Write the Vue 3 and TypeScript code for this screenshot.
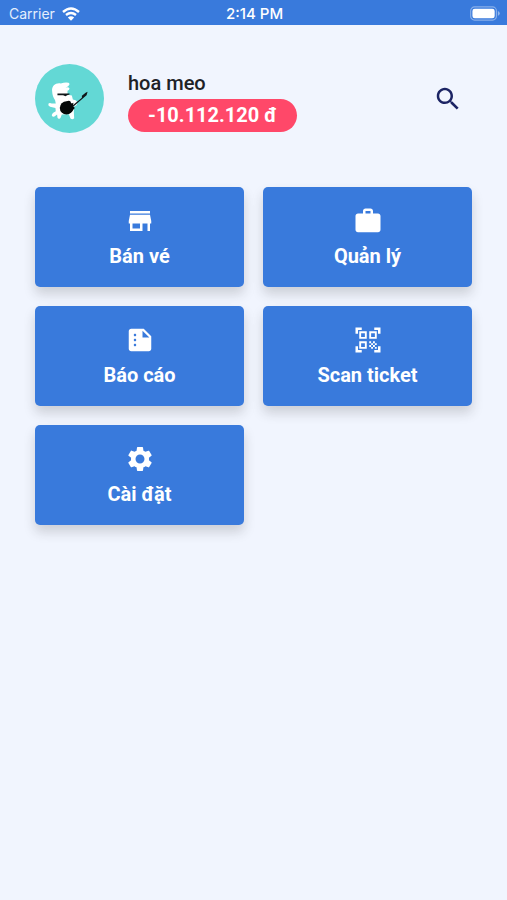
<script setup lang="ts">
interface MenuItem {
  label: string
  icon: string
}

const userName = 'hoa meo'
const balance = '-10.112.120 đ'

const items: MenuItem[] = [
  {
    label: 'Bán vé',
    icon: 'M20 4H4v2h16V4zm1 10v-2l-1-5H4l-1 5v2h1v6h10v-6h4v6h2v-6h1zm-9 4H6v-4h6v4z',
  },
  {
    label: 'Quản lý',
    icon: 'M20 6h-4V4c0-1.11-.89-2-2-2h-4c-1.11 0-2 .89-2 2v2H4c-1.11 0-2 .89-2 2v11c0 1.11.89 2 2 2h16c1.11 0 2-.89 2-2V8c0-1.11-.89-2-2-2zm-6 0h-4V4h4v2z',
  },
  {
    label: 'Báo cáo',
    icon: 'M15 3H5C3.9 3 3 3.9 3 5v14c0 1.1.9 2 2 2h14c1.1 0 2-.9 2-2V9l-6-6zM8 17c-.55 0-1-.45-1-1s.45-1 1-1 1 .45 1 1-.45 1-1 1zm0-4c-.55 0-1-.45-1-1s.45-1 1-1 1 .45 1 1-.45 1-1 1zm0-4c-.55 0-1-.45-1-1s.45-1 1-1 1 .45 1 1-.45 1-1 1zm6 1V4.500l5.500 5.500H14z',
  },
  {
    label: 'Scan ticket',
    icon: 'M9.500 6.500v3h-3v-3h3M11 5H5v6h6V5zM9.500 14.500v3h-3v-3h3M11 13H5v6h6v-6zM17.500 6.500v3h-3v-3h3M19 5h-6v6h6V5zM13 13h1.500v1.500H13V13zM14.500 14.500H16V16h-1.500v-1.500zM16 13h1.500v1.500H16V13zM13 16h1.500v1.500H13V16zM14.500 17.500H16V19h-1.500v-1.500zM16 16h1.500v1.500H16V16zM17.500 14.500H19V16h-1.500v-1.500zM17.500 17.500H19V19h-1.500v-1.500zM22 7h-2V4h-3V2h5v5zM22 22v-5h-2v3h-3v2h5zM2 22h5v-2H4v-3H2v5zM2 2v5h2V4h3V2H2z',
  },
  {
    label: 'Cài đặt',
    icon: 'M19.14 12.94c.04-.3.06-.61.06-.94 0-.32-.02-.64-.07-.94l2.030-1.580c.18-.14.23-.41.12-.61l-1.920-3.320c-.12-.22-.37-.29-.59-.22l-2.390.96c-.5-.38-1.030-.7-1.620-.94L14.400 2.810c-.04-.24-.24-.41-.48-.41h-3.840c-.24 0-.43.17-.47.41L9.250 5.350c-.59.24-1.130.57-1.620.94L5.240 5.330c-.22-.08-.47 0-.59.22L2.740 8.870c-.12.21-.08.47.12.61l2.030 1.580C4.840 11.360 4.800 11.690 4.800 12s.02.64.07.94l-2.030 1.580c-.18.14-.23.41-.12.61l1.920 3.320c.12.22.37.29.59.22l2.390-.96c.5.38 1.030.7 1.620.94l.36 2.540c.05.24.24.41.48.41h3.840c.24 0 .44-.17.47-.41l.36-2.540c.59-.24 1.130-.56 1.620-.94l2.390.96c.22.08.47 0 .59-.22l1.920-3.320c.12-.22.07-.47-.12-.61l-2.010-1.580zM12 15.600c-1.980 0-3.600-1.620-3.600-3.600s1.620-3.600 3.600-3.600 3.600 1.620 3.600 3.600-1.620 3.600-3.600 3.600z',
  },
]
</script>

<template>
  <div class="screen">
    <div class="status-bar">
      <div class="carrier">
        <span>Carrier</span>
        <svg class="wifi" viewBox="0 0 18 14" aria-hidden="true">
          <path d="M1 5Q9-2 17 5M4 8Q9 4 14 8" fill="none" stroke="currentColor" stroke-width="2.400" />
          <path d="M9 13.800L5.800 10.600Q9 8 12.200 10.600Z" fill="currentColor" />
        </svg>
      </div>
      <span class="clock">2:14 PM</span>
      <div class="battery">
        <svg viewBox="0 0 31 15" aria-hidden="true">
          <rect x="0.700" y="0.700" width="26.600" height="13.600" rx="4" fill="none" stroke="#fff" stroke-opacity="0.400" stroke-width="1.200" />
          <rect x="2.500" y="2.500" width="23" height="10" rx="2.500" fill="#fff" />
          <path d="M28.800 5v5q2-1 2-2.500T28.800 5z" fill="#fff" fill-opacity="0.450" />
        </svg>
      </div>
    </div>

    <header class="profile">
      <svg class="avatar" viewBox="0 0 206 206" aria-hidden="true">
        <circle cx="103" cy="103" r="103" fill="#63d8d5" />
        <path
          d="M51 80C50 65 62 55 77 58Q90 54 100 56Q107 60 98 67L91 70Q101 68 103 73Q102 79 97 80V92L110 94L113 106L121 108Q130 114 124 123L116 128V145L117 162Q112 168 106 163L101 150L80 151L76 161Q70 167 67 160L66 151L58 157Q50 159 50 152Q51 146 62 141L61 131L45 128Q38 125 40 119Q43 115 50 118H62L60 108Q52 98 51 80Z"
          fill="#fff"
        />
        <path d="M67 88h36v3l-7 2-5 3-7-3H67z" fill="#101719" />
        <circle cx="94" cy="131" r="20" fill="#050808" />
        <path d="M94 112Q102 108 106 112L108 119L115 116L113 125L119 131L108 143Z" fill="#050808" />
        <path d="M112 124L140 101V95L151 86L157 83L154 93L146 100L115 127Z" fill="#101719" />
      </svg>
      <div class="account">
        <div class="name">{{ userName }}</div>
        <div class="balance">{{ balance }}</div>
      </div>
      <button class="search" type="button" aria-label="Search">
        <svg class="icon" viewBox="0 0 24 24" aria-hidden="true">
          <path
            d="M15.500 14h-.79l-.28-.27C15.410 12.590 16 11.110 16 9.500 16 5.910 13.090 3 9.500 3S3 5.910 3 9.500 5.910 16 9.500 16c1.610 0 3.090-.59 4.230-1.570l.27.28v.79l5 4.990L20.490 19l-4.990-5zm-6 0C7.010 14 5 11.990 5 9.500S7.010 5 9.500 5 14 7.010 14 9.500 11.990 14 9.500 14z"
          />
        </svg>
      </button>
    </header>

    <main class="menu">
      <button v-for="item in items" :key="item.label" class="tile" type="button">
        <svg class="icon" viewBox="0 0 24 24" aria-hidden="true">
          <path :d="item.icon" fill-rule="evenodd" />
        </svg>
        <span>{{ item.label }}</span>
      </button>
    </main>
  </div>
</template>

<style>
body {
  margin: 0;
  background: #f1f5fe;
}
</style>

<style scoped>
.screen {
  min-height: 100vh;
  background: #f1f5fe;
  color: #202226;
  font-family: Roboto, "Noto Sans", sans-serif;
}

.status-bar {
  display: grid;
  grid-template-columns: 1fr auto 1fr;
  align-items: center;
  height: 25px;
  padding: 2px 7px 0 9px;
  box-sizing: border-box;
  background: #397adc;
  color: #fff;
  font-family: Inter, sans-serif;
  font-size: 14px;
}

.carrier {
  display: flex;
  align-items: center;
  gap: 7px;
  color: #e4eefc;
}

.wifi {
  width: 18px;
  height: 14px;
  color: #fff;
}

.clock {
  font-size: 15px;
  font-weight: 500;
}

.battery {
  display: flex;
  justify-content: flex-end;
}

.battery svg {
  width: 30px;
  height: 15px;
}

.profile {
  display: flex;
  align-items: center;
  padding: 39px 35px 0;
}

.avatar {
  flex: none;
  width: 69px;
  height: 69px;
}

.account {
  display: flex;
  flex: 1;
  flex-direction: column;
  align-items: flex-start;
  gap: 4px;
  margin-left: 24px;
  padding-top: 6px;
  font-size: 20px;
  line-height: 24px;
}

.name {
  font-weight: 500;
}

.balance {
  padding: 4px 20px 5px;
  border-radius: 17px;
  background: #ff4869;
  color: #fff;
  font-weight: 700;
}

.search {
  display: grid;
  place-items: center;
  width: 48px;
  height: 48px;
  padding: 0;
  border: 0;
  background: none;
  color: #1c2464;
}

.icon {
  width: 30px;
  height: 30px;
  fill: currentColor;
}

.menu {
  display: grid;
  grid-template-columns: 1fr 1fr;
  gap: 19px;
  padding: 54px 35px;
}

.tile {
  display: flex;
  flex-direction: column;
  align-items: center;
  justify-content: center;
  gap: 7px;
  height: 100px;
  padding: 0;
  border: 0;
  border-radius: 5px;
  background: #397adc;
  box-shadow: 0 7px 12px rgba(40, 40, 40, 0.18);
  color: #fff;
  font-family: inherit;
  font-size: 20px;
  font-weight: 700;
  line-height: 26px;
}
</style>
